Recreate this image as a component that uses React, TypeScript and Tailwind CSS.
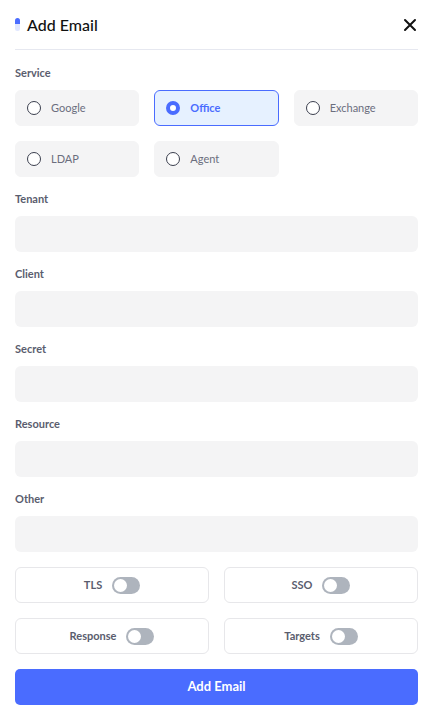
import { useState } from 'react';

const services = ['Google', 'Office', 'Exchange', 'LDAP', 'Agent'];
const fields = ['Tenant', 'Client', 'Secret', 'Resource', 'Other'];
const toggles = ['TLS', 'SSO', 'Response', 'Targets'];

const Radio = ({ checked }: { checked: boolean }) =>
    checked ? (
        <span className="w-[14px] h-[14px] rounded-full border-[4px] border-[#4a6cff] bg-white shrink-0"></span>
    ) : (
        <span className="w-[14px] h-[14px] rounded-full border-[1.5px] border-[#3b3f4e] bg-white shrink-0"></span>
    );

const Toggle = ({ on, onClick }: { on: boolean; onClick: () => void }) => (
    <button
        onClick={onClick}
        className={`w-[28px] h-[17px] rounded-full p-[2px] flex ${on ? 'bg-[#4a6cff] justify-end' : 'bg-[#aeb4bd] justify-start'}`}
    >
        <span className="w-[13px] h-[13px] rounded-full bg-white"></span>
    </button>
);

const App = () => {
    const [service, setService] = useState('Office');
    const [flags, setFlags] = useState<Record<string, boolean>>({});

    return (
        <div className="w-[435px] h-[714px] bg-white pl-[15px] pr-[17px] font-['Lato',sans-serif] text-[#111827]">
            <div className="h-[50px] flex items-center justify-between border-b border-[#e6e8f0] pt-[1px]">
                <div className="flex items-center gap-[7px]">
                    <span className="w-[5px] h-[13px] rounded-full bg-gradient-to-b from-[#4a6cff] from-50% to-[#dfe6ff] to-50% -mt-[2px]"></span>
                    <h1 className="text-[16px] font-medium text-[#111]">Add Email</h1>
                </div>
                <button className="mr-[1px]">
                    <svg width="14" height="14" viewBox="0 0 14 14" fill="none" stroke="#111" strokeWidth="2" strokeLinecap="round">
                        <path d="M2 2L12 12M12 2L2 12" />
                    </svg>
                </button>
            </div>

            <div className="pt-[15px]">
                <div className="text-[11px] leading-[16px] font-bold text-[#5a5d6e] mb-[9px]">Service</div>
                <div className="grid grid-cols-3 gap-x-[15px] gap-y-[15px]">
                    {services.map((s) => {
                        const checked = service === s;
                        return (
                            <button
                                key={s}
                                onClick={() => setService(s)}
                                className={`h-[36px] rounded-[6px] flex items-center gap-[10px] px-[11px] text-[11px] border ${
                                    checked
                                        ? 'bg-[#e6f1ff] border-[#4a6cff] text-[#4a6cff] font-bold'
                                        : 'bg-[#f4f4f5] border-[#f4f4f5] text-[#6b6e7e]'
                                }`}
                            >
                                <Radio checked={checked} />
                                {s}
                            </button>
                        );
                    })}
                </div>
            </div>

            <div className="pt-[14px] flex flex-col gap-[14px]">
                {fields.map((f) => (
                    <div key={f}>
                        <div className="text-[11px] leading-[16px] font-bold text-[#5a5d6e] mb-[9px]">{f}</div>
                        <input className="w-full h-[36px] rounded-[6px] bg-[#f4f4f5] outline-none px-3 text-[12px]" />
                    </div>
                ))}
            </div>

            <div className="pt-[15px] grid grid-cols-2 gap-[15px]">
                {toggles.map((t) => (
                    <div
                        key={t}
                        className="h-[36px] rounded-[6px] border border-[#e7e7ea] flex items-center justify-center gap-[10px]"
                    >
                        <span className="text-[11px] font-bold text-[#5a5d6e]">{t}</span>
                        <Toggle on={!!flags[t]} onClick={() => setFlags({ ...flags, [t]: !flags[t] })} />
                    </div>
                ))}
            </div>

            <button className="mt-[15px] w-full h-[36px] rounded-[5px] bg-[#4a6cff] text-white text-[13px] font-bold">
                Add Email
            </button>
        </div>
    );
};

export default App;
